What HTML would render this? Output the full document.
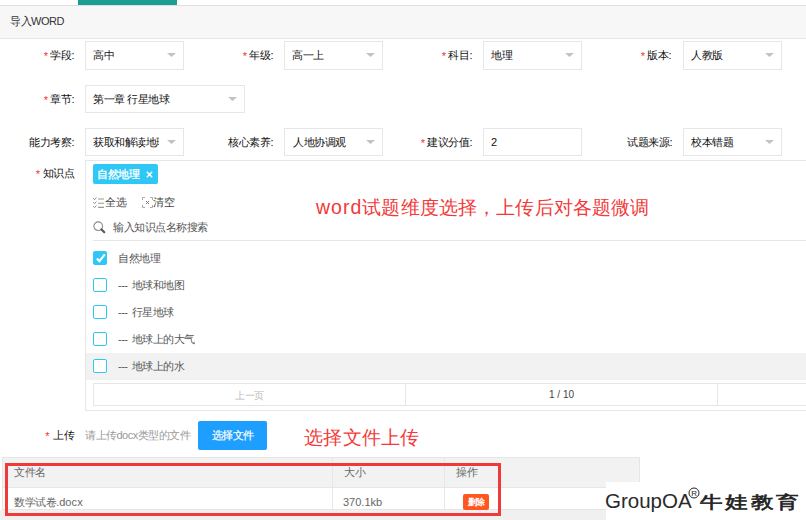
<!DOCTYPE html>
<html><head><meta charset="utf-8">
<style>
*{margin:0;padding:0;box-sizing:border-box}
html,body{width:806px;height:520px;overflow:hidden;background:#fff;font-family:"Liberation Sans",sans-serif;color:#333;letter-spacing:-0.5px}
.a{position:absolute}
.line{position:absolute;background:#e6e6e6}
.lbl{position:absolute;font-size:11px;color:#111;text-align:right;white-space:nowrap;line-height:14px}
.lbl i{font-style:normal;color:#f23030;margin-right:3px;position:relative;top:1px}
.sel{position:absolute;height:28px;border:1px solid #e6e6e6;background:#fff;font-size:11px;color:#111;line-height:26px;padding-left:7px;white-space:nowrap;overflow:hidden}
.sel b{position:absolute;right:7px;top:11px;width:9px;height:4px;background:#c2c2c2;clip-path:polygon(0 0,100% 0,50% 100%)}
.cb{position:absolute;left:93px;width:14px;height:14px;border:1px solid #2ec7f6;border-radius:2px;background:#fff}
.item{position:absolute;left:118px;font-size:11px;color:#555;line-height:14px;white-space:nowrap}
.red{position:absolute;color:#f23a3a;font-size:19.5px;line-height:22px;white-space:nowrap}
</style></head><body>
<!-- top tab bar -->
<div class="a" style="left:78px;top:0;width:99px;height:5px;background:#1b9e92"></div>
<div class="line" style="left:0;top:5px;width:806px;height:1px;background:#dedede"></div>
<div class="a" style="left:0;top:6px;width:806px;height:32px;background:#f7f7f7"></div>
<div class="line" style="left:0;top:38px;width:806px;height:1px"></div>
<div class="a" style="left:10px;top:14px;font-size:11px;line-height:14px;color:#333">导入WORD</div>

<!-- row 1 -->
<div class="lbl" style="right:732px;top:48px"><i>*</i>学段:</div>
<div class="sel" style="left:85px;top:41px;height:29px;line-height:27px;width:99px">高中<b></b></div>
<div class="lbl" style="right:533px;top:48px"><i>*</i>年级:</div>
<div class="sel" style="left:284px;top:41px;height:29px;line-height:27px;width:99px">高一上<b></b></div>
<div class="lbl" style="right:334px;top:48px"><i>*</i>科目:</div>
<div class="sel" style="left:483px;top:41px;height:29px;line-height:27px;width:99px">地理<b></b></div>
<div class="lbl" style="right:135px;top:48px"><i>*</i>版本:</div>
<div class="sel" style="left:683px;top:41px;height:29px;line-height:27px;width:99px">人教版<b></b></div>

<!-- row 2 -->
<div class="lbl" style="right:732px;top:92px"><i>*</i>章节:</div>
<div class="sel" style="left:85px;top:85px;width:160px">第一章 行星地球<b></b></div>

<!-- row 3 -->
<div class="lbl" style="right:732px;top:135px">能力考察:</div>
<div class="sel" style="left:85px;top:128px;width:99px"><span style="display:block;width:66px;overflow:hidden">获取和解读地理</span><b></b></div>
<div class="lbl" style="right:533px;top:135px">核心素养:</div>
<div class="sel" style="left:284px;top:128px;width:99px;padding-left:8px">人地协调观<b></b></div>
<div class="lbl" style="right:334px;top:135px"><i>*</i>建议分值:</div>
<div class="sel" style="left:483px;top:128px;width:99px">2</div>
<div class="lbl" style="right:134px;top:135px">试题来源:</div>
<div class="sel" style="left:683px;top:128px;width:99px">校本错题<b></b></div>

<!-- knowledge -->
<div class="lbl" style="right:732px;top:166px"><i>*</i>知识点</div>
<div class="a" style="left:85px;top:160px;width:960px;height:251px;border:1px solid #e6e6e6"></div>
<div class="a" style="left:93px;top:164px;width:65px;height:20px;background:#2ec7f6;border-radius:2px;color:#fff;font-size:11px;line-height:20px;padding-left:4px;white-space:nowrap;-webkit-text-stroke:0.3px #fff">自然地理<svg style="position:absolute;left:53px;top:7px" width="7" height="7" viewBox="0 0 7 7"><path d="M0.8 0.8L6.2 6.2M6.2 0.8L0.8 6.2" stroke="#fff" stroke-width="1.5"/></svg></div>
<svg class="a" style="left:92px;top:196px" width="14" height="13" viewBox="0 0 14 13">
<g fill="none" stroke="#888" stroke-width="1"><path d="M1.2 2.3 L2.6 3.6 L4.4 1.6"/><path d="M1.2 6.3 L2.6 7.6 L4.4 5.6"/><path d="M1.2 10.3 L2.6 11.6 L4.4 9.6"/></g>
<g stroke="#999" stroke-width="1.1"><path d="M6 3h6M6 7.2h6M6 11.4h6"/></g></svg>
<div class="a" style="left:105px;top:195px;font-size:11px;color:#444;line-height:14px">全选</div>
<svg class="a" style="left:141px;top:196px" width="13" height="13" viewBox="0 0 13 13">
<g fill="none" stroke="#aaa" stroke-width="1"><path d="M1.5 4V1.5H4M9 1.5H11.5V4M11.5 9V11.5H9M4 11.5H1.5V9"/><path d="M5 5L8 8M8 5L5 8" stroke="#777"/></g></svg>
<div class="a" style="left:153px;top:195px;font-size:11px;color:#444;line-height:14px">清空</div>
<svg class="a" style="left:92px;top:220px" width="14" height="14" viewBox="0 0 14 14">
<circle cx="6.2" cy="6.2" r="4.3" fill="none" stroke="#8a8a8a" stroke-width="1.1"/><path d="M9.3 9.3L12.3 12.3" stroke="#555" stroke-width="2" stroke-linecap="round"/></svg>
<div class="a" style="left:113px;top:220px;font-size:11px;color:#555;line-height:14px">输入知识点名称搜索</div>
<div class="line" style="left:93px;top:240px;width:713px;height:1px"></div>

<div class="cb" style="top:251px;background:#2ec7f6"><svg style="position:absolute;left:1px;top:1px" width="12" height="12" viewBox="0 0 12 12"><path d="M1.9 5.6L4.4 8.1L9.8 1.4" fill="none" stroke="#fff" stroke-width="2.1"/></svg></div>
<div class="item" style="top:251px">自然地理</div>
<div class="cb" style="top:278px"></div>
<div class="item" style="top:278px">---<span style="display:inline-block;width:4px"></span>地球和地图</div>
<div class="cb" style="top:305px"></div>
<div class="item" style="top:305px">---<span style="display:inline-block;width:4px"></span>行星地球</div>
<div class="cb" style="top:332px"></div>
<div class="item" style="top:332px">---<span style="display:inline-block;width:4px"></span>地球上的大气</div>
<div class="a" style="left:86px;top:353px;width:720px;height:27px;background:#f2f2f2"></div>
<div class="cb" style="top:359px"></div>
<div class="item" style="top:359px">---<span style="display:inline-block;width:4px"></span>地球上的水</div>

<!-- pagination -->
<div class="a" style="left:93px;top:383px;width:313px;height:23px;border:1px solid #e6e6e6;font-size:10px;color:#bbb;text-align:center;line-height:23px">上一页</div>
<div class="a" style="left:405px;top:383px;width:313px;height:23px;border:1px solid #e6e6e6;font-size:10px;color:#444;text-align:center;line-height:21px;letter-spacing:0">1 / 10</div>
<div class="a" style="left:717px;top:383px;width:313px;height:23px;border:1px solid #e6e6e6"></div>

<div class="red" style="left:316px;top:196px"><span style="letter-spacing:1px">word</span><span style="font-size:19px;letter-spacing:0.15px">试题维度选择，上传后对各题微调</span></div>

<!-- upload -->
<div class="lbl" style="right:732px;top:428px;font-size:11px;color:#111"><i style="margin-right:4px">*</i>上传</div>
<div class="a" style="left:85px;top:428px;font-size:11px;color:#999;line-height:14px;white-space:nowrap">请上传docx类型的文件</div>
<div class="a" style="left:198px;top:421px;width:69px;height:29px;background:#1e9fff;border-radius:2px;color:#fff;font-size:11px;line-height:29px;text-align:center;-webkit-text-stroke:0.2px #fff">选择文件</div>
<div class="red" style="left:304px;top:427px;font-size:19px;letter-spacing:0.3px">选择文件上传</div>

<!-- table -->
<div class="a" style="left:0;top:510px;width:606px;height:10px;background:#f0f0f0"></div>
<div class="a" style="left:2px;top:457px;width:638px;height:53px;border:1px solid #e6e6e6;background:#fff"></div>
<div class="a" style="left:3px;top:458px;width:636px;height:30px;background:#f2f2f2;border-bottom:1px solid #e6e6e6"></div>
<div class="line" style="left:332px;top:458px;width:1px;height:52px"></div>
<div class="line" style="left:444px;top:458px;width:1px;height:52px"></div>
<div class="a" style="left:14px;top:465px;font-size:11px;color:#666;line-height:14px">文件名</div>
<div class="a" style="left:344px;top:465px;font-size:11px;color:#666;line-height:14px">大小</div>
<div class="a" style="left:456px;top:465px;font-size:11px;color:#666;line-height:14px">操作</div>
<div class="a" style="left:14px;top:495px;font-size:11px;color:#666;line-height:14px">数学试卷<span style="letter-spacing:0.1px">.docx</span></div>
<div class="a" style="left:343px;top:495px;font-size:11px;color:#666;line-height:14px;letter-spacing:0px">370.1kb</div>
<div class="a" style="left:463px;top:494px;width:26px;height:16px;background:#ff5722;border-radius:2px;color:#fff;font-size:9px;line-height:16px;text-align:center;font-weight:bold">删除</div>
<div class="a" style="left:5px;top:463px;width:496px;height:53px;border:3px solid #f03a3a"></div>

<!-- watermark -->
<div class="a" style="left:606px;top:482px;width:200px;height:38px;background:#fff"></div>
<div class="a" style="left:605px;top:489px;font-size:20.5px;line-height:24px;color:#2a2a2a;white-space:nowrap;letter-spacing:0px">GroupOA</div>
<svg class="a" style="left:688px;top:487px" width="12" height="12" viewBox="0 0 12 12"><circle cx="6" cy="6" r="5" fill="none" stroke="#222" stroke-width="1"/><text x="6" y="8.8" font-size="8" text-anchor="middle" font-family="Liberation Sans" fill="#222">R</text></svg>
<div class="a" style="left:700px;top:491px;font-family:'Liberation Serif',serif;font-weight:normal;-webkit-text-stroke:0.6px #222;font-size:17px;line-height:24px;color:#222;white-space:nowrap;letter-spacing:2px;transform:scaleX(1.33);transform-origin:0 0">牛娃教育</div>
</body></html>
